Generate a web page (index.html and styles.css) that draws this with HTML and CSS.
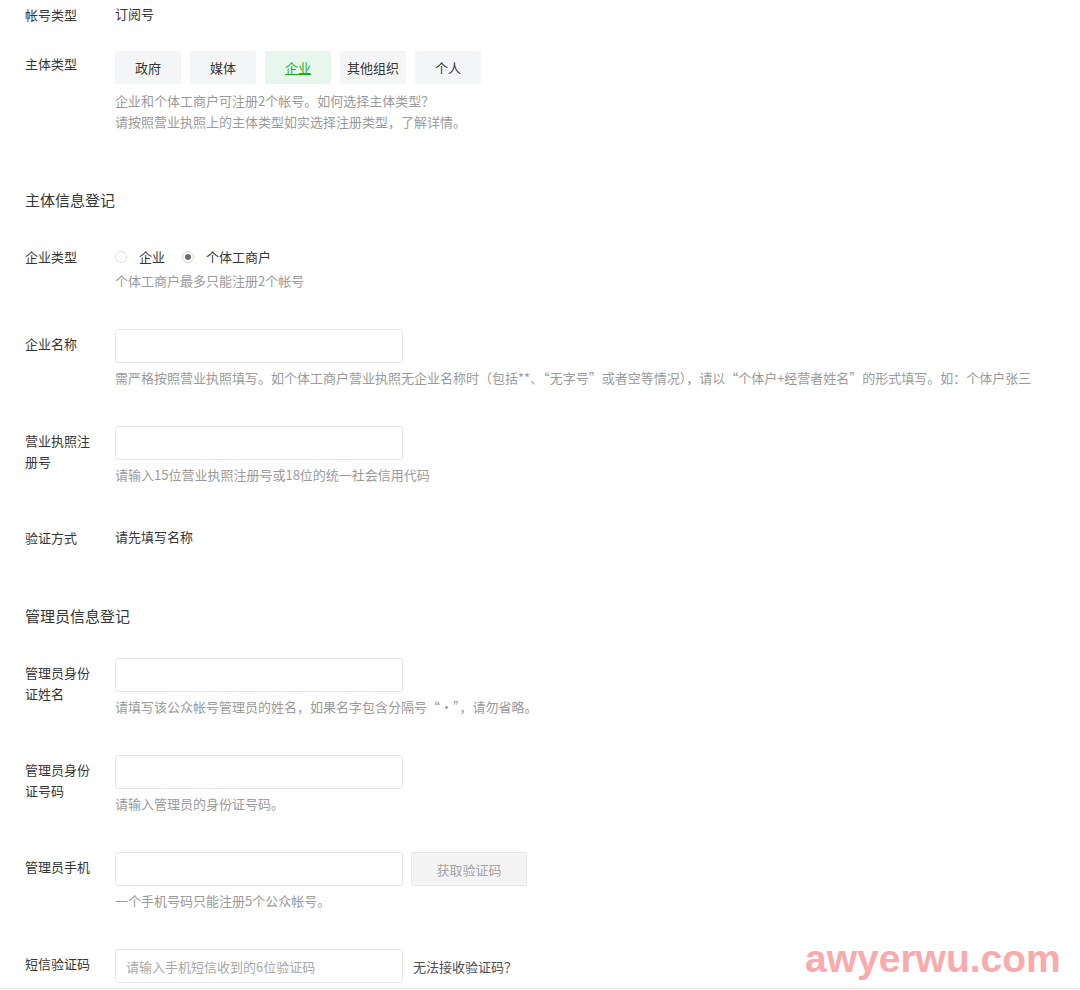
FILE: index.html
```html
<!DOCTYPE html>
<html lang="zh-CN">
<head>
  <meta charset="UTF-8">
  <title>公众号注册 - 信息登记</title>
  <link rel="stylesheet" href="styles.css">
</head>
<body>

  <div class="page">
    <div class="form">

      <div class="row row-first">
        <div class="label">帐号类型</div>
        <div class="field">
          <div class="text">订阅号</div>
        </div>
      </div>

      <div class="row row-types">
        <div class="label">主体类型</div>
        <div class="field">
          <div class="type-list">
            <a class="type-btn">政府</a>
            <a class="type-btn">媒体</a>
            <a class="type-btn selected">企业</a>
            <a class="type-btn">其他组织</a>
            <a class="type-btn">个人</a>
          </div>
          <p class="tips tips-types">企业和个体工商户可注册2个帐号。如何选择主体类型？<br>请按照营业执照上的主体类型如实选择注册类型，了解详情。</p>
        </div>
      </div>

      <h3 class="section-title">主体信息登记</h3>

      <div class="row">
        <div class="label">企业类型</div>
        <div class="field">
          <div class="radio-group">
            <label class="radio-item"><span class="radio"></span>企业</label>
            <label class="radio-item"><span class="radio checked"></span>个体工商户</label>
          </div>
          <p class="tips tips-radio">个体工商户最多只能注册2个帐号</p>
        </div>
      </div>

      <div class="row">
        <div class="label">企业名称</div>
        <div class="field">
          <input type="text" class="input">
          <p class="tips">需严格按照营业执照填写。如个体工商户营业执照无企业名称时（包括**、“无字号”或者空等情况），请以“个体户+经营者姓名”的形式填写。如：个体户张三</p>
        </div>
      </div>

      <div class="row">
        <div class="label">营业执照注册号</div>
        <div class="field">
          <input type="text" class="input">
          <p class="tips">请输入15位营业执照注册号或18位的统一社会信用代码</p>
        </div>
      </div>

      <div class="row">
        <div class="label">验证方式</div>
        <div class="field">
          <div class="text">请先填写名称</div>
        </div>
      </div>

      <h3 class="section-title">管理员信息登记</h3>

      <div class="row">
        <div class="label">管理员身份证姓名</div>
        <div class="field">
          <input type="text" class="input">
          <p class="tips">请填写该公众帐号管理员的姓名，如果名字包含分隔号“·”，请勿省略。</p>
        </div>
      </div>

      <div class="row">
        <div class="label">管理员身份证号码</div>
        <div class="field">
          <input type="text" class="input">
          <p class="tips">请输入管理员的身份证号码。</p>
        </div>
      </div>

      <div class="row">
        <div class="label">管理员手机</div>
        <div class="field">
          <div class="inline">
            <input type="text" class="input">
            <button class="code-btn" disabled>获取验证码</button>
          </div>
          <p class="tips">一个手机号码只能注册5个公众帐号。</p>
        </div>
      </div>

      <div class="row row-last">
        <div class="label">短信验证码</div>
        <div class="field">
          <div class="inline">
            <input type="text" class="input" placeholder="请输入手机短信收到的6位验证码">
            <a class="link">无法接收验证码？</a>
          </div>
        </div>
      </div>

    </div>

    <div class="footer-line"></div>

    <div class="watermark">awyerwu.com</div>
  </div>

</body>
</html>
```

FILE: styles.css
```css
:root {
  --text-color: #353535;
  --tips-color: #9a9a9a;
  --border: #e4e4e4;
  --btn-bg: #f4f5f7;
  --green: #1aad19;
}

body {
  margin: 0;
  background: #fff;
  color: var(--text-color);
  font-family: "Noto Sans CJK SC", "Liberation Sans", sans-serif;
  font-size: 13px;
}

.page {
  position: relative;
  width: 1080px;
  height: 990px;
  overflow: hidden;
}

.form {
  display: flex;
  flex-direction: column;
  padding-left: 25px;
}

.row {
  display: flex;
  margin-bottom: 38px;
}

.row-first {
  margin-bottom: 26px;
}

.row-last {
  margin-bottom: 0;
}

.label {
  width: 68px;
  margin-right: 22px;
  padding-top: 4px;
  line-height: 21px;
  flex-shrink: 0;
}

.row-types .label {
  padding-top: 2px;
}

.field {
  flex: 1;
}

.text {
  padding-top: 4px;
  line-height: 20px;
}

.type-list {
  display: flex;
  gap: 9px;
}

.type-btn {
  width: 66px;
  height: 33px;
  line-height: 33px;
  text-align: center;
  background: var(--btn-bg);
  border-radius: 2px;
  color: var(--text-color);
}

.type-btn.selected {
  background: #e8f7ee;
  color: var(--green);
  text-decoration: underline;
}

.tips {
  margin: 5px 0 0;
  line-height: 20px;
  color: var(--tips-color);
}

.tips-types {
  margin-top: 6px;
  line-height: 21px;
}

.tips-radio {
  margin-top: 4px;
}

.section-title {
  margin: 18px 0 30px;
  font-size: 15px;
  font-weight: normal;
  line-height: 24px;
  color: var(--text-color);
}

.radio-group {
  display: flex;
  gap: 17px;
  padding-top: 4px;
  line-height: 21px;
}

.radio-item {
  display: flex;
  align-items: center;
}

.radio {
  position: relative;
  width: 10px;
  height: 10px;
  margin: 0 12px 0 0;
  border: 1px solid #e2e2e2;
  border-radius: 50%;
  box-sizing: content-box;
}

.radio.checked {
  border-color: #d4d4d4;
}

.radio.checked::after {
  content: "";
  position: absolute;
  left: 2px;
  top: 2px;
  width: 6px;
  height: 6px;
  border-radius: 50%;
  background: #6b6b6b;
}

.input {
  display: block;
  width: 288px;
  height: 34px;
  box-sizing: border-box;
  padding: 0 10px;
  border: 1px solid #e7e7e7;
  border-radius: 3px;
  font-family: inherit;
  font-size: 13px;
  color: var(--text-color);
  outline: none;
}

.input::placeholder {
  color: #a8a8a8;
}

.inline {
  display: flex;
  align-items: center;
}

.code-btn {
  width: 116px;
  height: 34px;
  margin-left: 8px;
  border: 1px solid #e6e6e6;
  border-radius: 2px;
  background: #f4f4f4;
  color: #a3a3a3;
  font-family: inherit;
  font-size: 13px;
}

.link {
  margin-left: 10px;
  color: #4e4e4e;
}

.footer-line {
  margin-top: 5px;
  border-top: 1px solid #e7e7e7;
}

.watermark {
  position: absolute;
  left: 805px;
  top: 939px;
  font-family: "Liberation Sans", sans-serif;
  font-weight: bold;
  font-size: 39px;
  line-height: 1;
  color: #f9aaac;
}
```
